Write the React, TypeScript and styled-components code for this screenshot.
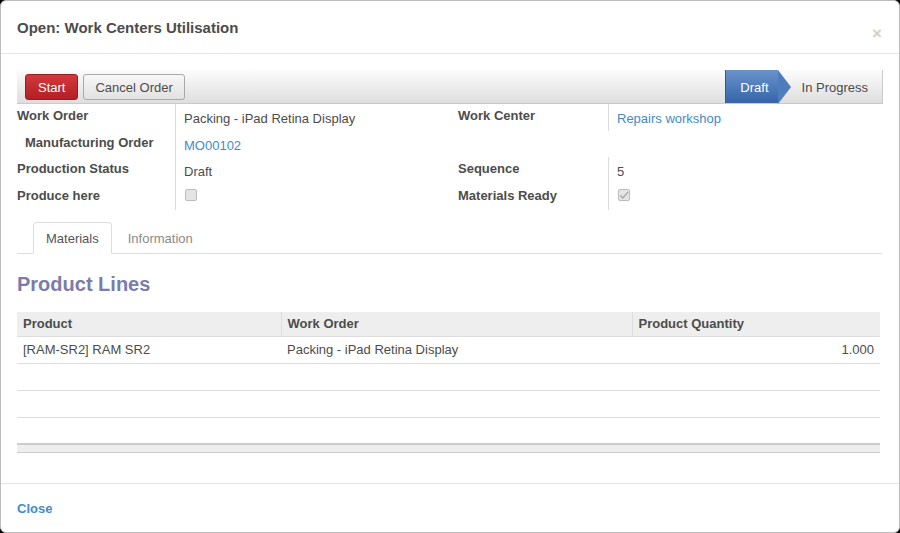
import React from "react";
import styled, { createGlobalStyle } from "styled-components";

const Global = createGlobalStyle`
  html, body { margin: 0; padding: 0; background: #000; }
  body { font-family: "Liberation Sans", Arial, Helvetica, sans-serif; font-size: 13px; color: #4c4c4c; }
  * { box-sizing: border-box; }
`;

const Modal = styled.div`
  width: 900px;
  height: 533px;
  background: #fff;
  border: 1px solid #bdbdbd;
  border-radius: 6px;
  display: flex;
  flex-direction: column;
  overflow: hidden;
`;

const Header = styled.div`
  height: 53px;
  border-bottom: 1px solid #e5e5e5;
  display: flex;
  align-items: center;
  justify-content: space-between;
  padding: 1px 17px 0 16px;
`;

const Title = styled.h4`
  margin: 0;
  font-size: 15px;
  font-weight: bold;
  color: #4c4c4c;
  line-height: 20px;
`;

const CloseX = styled.span`
  font-size: 17px;
  font-weight: bold;
  color: #d0d0d0;
  margin-top: 12px;
  line-height: 1;
`;

const Body = styled.div`
  flex: 1;
  padding: 16px 16px 0 16px;
  display: flex;
  flex-direction: column;
`;

const StatusBar = styled.div`
  height: 34px;
  display: flex;
  align-items: center;
  justify-content: space-between;
  background: linear-gradient(#fcfcfc, #dedede);
  border-bottom: 1px solid #cacaca;
  border-right: 1px solid #cacaca;
  padding-left: 8px;
`;

const Buttons = styled.div`
  display: flex;
  gap: 5px;
  margin-top: 1px;
`;

const Btn = styled.button<{ $primary?: boolean }>`
  height: 26px;
  padding: 1px ${(p) => (p.$primary ? 12 : 11)}px 0;
  font-family: inherit;
  font-size: 13px;
  border-radius: 3px;
  border: 1px solid ${(p) => (p.$primary ? "#9b1b1f" : "#a9a9a9")};
  color: ${(p) => (p.$primary ? "#fff" : "#4c4c4c")};
  background: ${(p) =>
    p.$primary ? "linear-gradient(#d3393c, #b21f24)" : "linear-gradient(#f7f7f7, #e2e2e2)"};
`;

const Stages = styled.div`
  display: flex;
  height: 100%;
  align-items: stretch;
`;

const Stage = styled.div<{ $active?: boolean }>`
  position: relative;
  display: flex;
  align-items: center;
  padding: ${(p) => (p.$active ? "1px 9px 0 14px" : "1px 14px 0 24px")};
  color: ${(p) => (p.$active ? "#fff" : "#4c4c4c")};
  background: ${(p) => (p.$active ? "linear-gradient(#6a93ca, #3564a8)" : "transparent")};
  border-left: ${(p) => (p.$active ? "1px solid #2e5a99" : "none")};
  font-size: 13px;
`;

const Arrow = styled.span`
  position: absolute;
  right: -13px;
  top: 0;
  width: 0;
  height: 0;
  border-top: 17px solid transparent;
  border-bottom: 17px solid transparent;
  border-left: 13px solid #4f7cba;
  z-index: 1;
`;

const Form = styled.div`
  display: flex;
  height: 106px;
`;

const FieldGroup = styled.div<{ $label: number; $pad: number }>`
  width: 50%;
  display: grid;
  grid-template-columns: ${(p) => p.$label}px 1fr;
  grid-auto-rows: 26.5px;
  padding-left: ${(p) => p.$pad}px;
`;

const Label = styled.div<{ $indent?: boolean; $noline?: boolean }>`
  font-weight: bold;
  color: #4c4c4c;
  padding-top: 3px;
  padding-left: ${(p) => (p.$indent ? "8px" : "0")};
  border-right: ${(p) => (p.$noline ? "none" : "1px solid #dcdcdc")};
  line-height: 17px;
`;

const Value = styled.div<{ $link?: boolean }>`
  padding-left: 8px;
  padding-top: 6px;
  line-height: 17px;
  color: ${(p) => (p.$link ? "#428bca" : "#4c4c4c")};
`;

const CheckWrap = styled.div`
  padding-left: 9px;
  padding-top: 5px;
`;

const Check = styled.span`
  display: inline-flex;
  align-items: center;
  justify-content: center;
  width: 12px;
  height: 12px;
  border: 1px solid #bdbdbd;
  border-radius: 2px;
  background: #e4e4e4;
`;

const Tabs = styled.div`
  margin-top: 12px;
  display: flex;
  border-bottom: 1px solid #dddddd;
  padding-left: 16px;
  margin-right: 1px;
`;

const Tab = styled.div<{ $active?: boolean }>`
  height: 32px;
  margin-bottom: -1px;
  margin-right: 3px;
  padding: 0 12px;
  display: flex;
  align-items: center;
  border: 1px solid ${(p) => (p.$active ? "#dddddd" : "transparent")};
  border-bottom-color: ${(p) => (p.$active ? "#fff" : "transparent")};
  border-radius: 4px 4px 0 0;
  background: ${(p) => (p.$active ? "#fff" : "transparent")};
  color: ${(p) => (p.$active ? "#555" : "#8a8a8a")};
`;

const Heading = styled.h3`
  margin: 18px 0 0 0;
  font-size: 20px;
  line-height: 24px;
  font-weight: bold;
  color: #7c7bad;
`;

const Table = styled.table`
  margin-top: 16px;
  width: 863px;
  border-collapse: collapse;
  table-layout: fixed;
`;

const Th = styled.th<{ $w: number }>`
  width: ${(p) => p.$w}px;
  height: 24px;
  background: #eeeeee;
  text-align: left;
  padding: 0 6px;
  font-weight: bold;
  color: #4c4c4c;
  border-bottom: 1px solid #dddddd;
  border-left: 1px solid #dddddd;
  &:first-child { border-left: none; }
`;

const Td = styled.td<{ $right?: boolean }>`
  height: 27px;
  padding: 0 6px;
  text-align: ${(p) => (p.$right ? "right" : "left")};
  border-bottom: 1px solid #dddddd;
  color: #4c4c4c;
`;

const FootRow = styled.td`
  height: 8px;
  padding: 0;
  background: #eeeeee;
  border-top: 2px solid #cccccc;
  border-bottom: 1px solid #cccccc;
`;

const Footer = styled.div`
  height: 49px;
  border-top: 1px solid #e5e5e5;
  display: flex;
  align-items: center;
  padding-left: 16px;
`;

const CloseLink = styled.a`
  font-weight: bold;
  color: #428bca;
  text-decoration: none;
  font-size: 13px;
`;

export default function App() {
  const rows = [
    ["[RAM-SR2] RAM SR2", "Packing - iPad Retina Display", "1.000"],
    ["", "", ""],
    ["", "", ""],
    ["", "", ""],
  ];
  return (
    <>
      <Global />
      <Modal>
        <Header>
          <Title>Open: Work Centers Utilisation</Title>
          <CloseX>×</CloseX>
        </Header>
        <Body>
          <StatusBar>
            <Buttons>
              <Btn $primary>Start</Btn>
              <Btn>Cancel Order</Btn>
            </Buttons>
            <Stages>
              <Stage $active>
                Draft
                <Arrow />
              </Stage>
              <Stage>In Progress</Stage>
            </Stages>
          </StatusBar>
          <Form>
            <FieldGroup $label={159} $pad={0}>
              <Label>Work Order</Label>
              <Value>Packing - iPad Retina Display</Value>
              <Label $indent>Manufacturing Order</Label>
              <Value $link>MO00102</Value>
              <Label>Production Status</Label>
              <Value>Draft</Value>
              <Label>Produce here</Label>
              <CheckWrap>
                <Check />
              </CheckWrap>
            </FieldGroup>
            <FieldGroup $label={151} $pad={8}>
              <Label>Work Center</Label>
              <Value $link>Repairs workshop</Value>
              <Label $noline />
              <Value />
              <Label>Sequence</Label>
              <Value>5</Value>
              <Label>Materials Ready</Label>
              <CheckWrap>
                <Check>
                  <svg width="11" height="11" viewBox="0 0 11 11">
                    <path d="M1.5 5.5 L4.2 8.2 L10 1.5" fill="none" stroke="#a8a8a8" strokeWidth="1.6" />
                  </svg>
                </Check>
              </CheckWrap>
            </FieldGroup>
          </Form>
          <Tabs>
            <Tab $active>Materials</Tab>
            <Tab>Information</Tab>
          </Tabs>
          <Heading>Product Lines</Heading>
          <Table>
            <thead>
              <tr>
                <Th $w={264}>Product</Th>
                <Th $w={351}>Work Order</Th>
                <Th $w={248}>Product Quantity</Th>
              </tr>
            </thead>
            <tbody>
              {rows.map((r, i) => (
                <tr key={i}>
                  <Td>{r[0]}</Td>
                  <Td>{r[1]}</Td>
                  <Td $right>{r[2]}</Td>
                </tr>
              ))}
            </tbody>
            <tfoot>
              <tr>
                <FootRow />
                <FootRow />
                <FootRow />
              </tr>
            </tfoot>
          </Table>
        </Body>
        <Footer>
          <CloseLink href="#">Close</CloseLink>
        </Footer>
      </Modal>
    </>
  );
}
